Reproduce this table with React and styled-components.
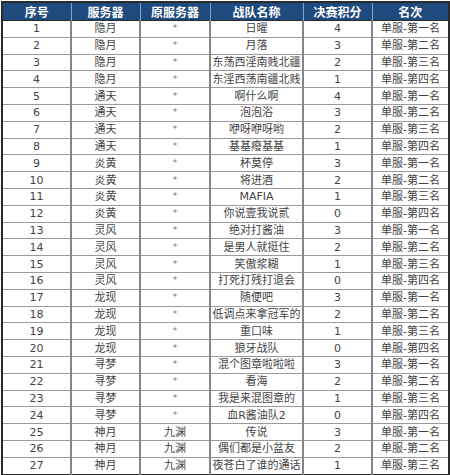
import styled, { createGlobalStyle } from "styled-components";

const GlobalStyle = createGlobalStyle`
  html, body {
    margin: 0;
    padding: 0;
    background: #fff;
  }
  body {
    font-family: "DejaVu Sans", "Noto Sans CJK SC", sans-serif;
  }
`;

const ROWS = [
  ["1", "隐月", "*", "日曜", "4", "单服-第一名"],
  ["2", "隐月", "*", "月落", "3", "单服-第二名"],
  ["3", "隐月", "*", "东荡西淫南贱北疆", "2", "单服-第三名"],
  ["4", "隐月", "*", "东淫西荡南疆北贱", "1", "单服-第四名"],
  ["5", "通天", "*", "啊什么啊", "4", "单服-第一名"],
  ["6", "通天", "*", "泡泡浴", "3", "单服-第二名"],
  ["7", "通天", "*", "咿呀咿呀哟", "2", "单服-第三名"],
  ["8", "通天", "*", "基基癈基基", "1", "单服-第四名"],
  ["9", "炎黄", "*", "杯莫停", "3", "单服-第一名"],
  ["10", "炎黄", "*", "将进酒", "2", "单服-第二名"],
  ["11", "炎黄", "*", "MAFIA", "1", "单服-第三名"],
  ["12", "炎黄", "*", "你说壹我说贰", "0", "单服-第四名"],
  ["13", "灵风", "*", "绝对打酱油", "3", "单服-第一名"],
  ["14", "灵风", "*", "是男人就挺住", "2", "单服-第二名"],
  ["15", "灵风", "*", "笑傲浆糊", "1", "单服-第三名"],
  ["16", "灵风", "*", "打死打残打退会", "0", "单服-第四名"],
  ["17", "龙现", "*", "随便吧", "3", "单服-第一名"],
  ["18", "龙现", "*", "低调点来拿冠军的", "2", "单服-第二名"],
  ["19", "龙现", "*", "重口味", "1", "单服-第三名"],
  ["20", "龙现", "*", "狼牙战队", "0", "单服-第四名"],
  ["21", "寻梦", "*", "混个图章啦啦啦", "3", "单服-第一名"],
  ["22", "寻梦", "*", "看海", "2", "单服-第二名"],
  ["23", "寻梦", "*", "我是来混图章的", "1", "单服-第三名"],
  ["24", "寻梦", "*", "血R酱油队2", "0", "单服-第四名"],
  ["25", "神月", "九渊", "传说", "3", "单服-第一名"],
  ["26", "神月", "九渊", "偶们都是小盆友", "2", "单服-第二名"],
  ["27", "神月", "九渊", "夜苍白了谁的通话", "1", "单服-第三名"],
];

const HEADERS = ["序号", "服务器", "原服务器", "战队名称", "决赛积分", "名次"];
const WIDTHS = [69, 69, 70, 93, 69, 77];

export default function App() {
  return (
    <Page>
      <GlobalStyle />
      <Table>
        <colgroup>
          {WIDTHS.map((w, i) => (
            <col key={i} style={{ width: w }} />
          ))}
        </colgroup>
        <thead>
          <tr>
            {HEADERS.map((h) => (
              <Th key={h}>{h}</Th>
            ))}
          </tr>
        </thead>
        <tbody>
          {ROWS.map((r) => (
            <Row key={r[0]}>
              {r.map((c, i) => (
                <Td key={i} $star={c === "*"}>
                  {c}
                </Td>
              ))}
            </Row>
          ))}
        </tbody>
      </Table>
    </Page>
  );
}

const Page = styled.div`
  padding: 1px 0 0 1px;
  width: 450px;
  box-sizing: border-box;
`;

const Table = styled.table`
  width: 448px;
  table-layout: fixed;
  border-collapse: collapse;
  border: 2px solid #2b2b2b;
`;

const Th = styled.th`
  height: 17px;
  padding: 0;
  background: #1f4a7d;
  color: #fff;
  font-family: "Noto Sans CJK SC", sans-serif;
  font-size: 12px;
  font-weight: bold;
  line-height: 17px;
  text-align: center;
  border-left: 1px solid #8fa2bb;
  border-bottom: 1px solid #2b2b2b;
  &:first-child {
    border-left: none;
  }
`;

const Row = styled.tr`
  height: 16.8px;
`;

const Td = styled.td`
  padding: 0;
  height: 15.8px;
  color: ${(p) => (p.$star ? "#777" : "#444")};
  font-size: ${(p) => (p.$star ? "9px" : "11px")};
  line-height: 15px;
  text-align: center;
  white-space: nowrap;
  overflow: hidden;
  border-left: 2px solid #858585;
  border-top: 1px solid #9a9a9a;
  &:first-child {
    border-left: none;
  }
`;
